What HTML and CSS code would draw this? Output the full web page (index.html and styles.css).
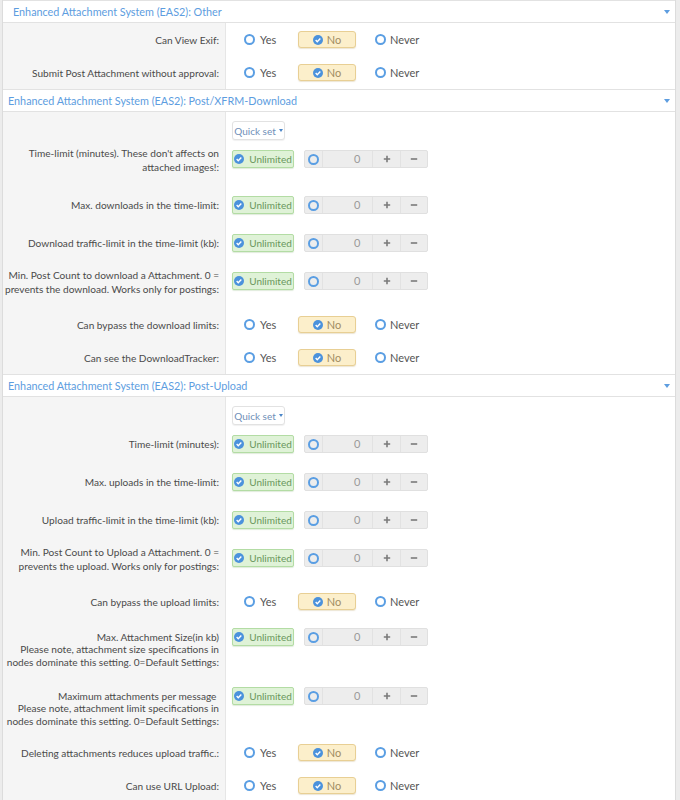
FILE: index.html
```html
<!DOCTYPE html>
<html lang="en">
<head>
    <meta charset="UTF-8">
    <title>EAS2 Permissions</title>
    <link rel="stylesheet" href="styles.css">
</head>
<body>
    <div class="blocks">

        <!-- Other -->
        <section class="block block--first">
            <h2 class="block-header">Enhanced Attachment System (EAS2): Other <span class="toggle"></span></h2>
            <div class="row row--radio">
                <div class="row-label">Can View Exif:</div>
                <div class="row-input">
                    <div class="choices">
                        <span class="choice"><i class="radio"></i>Yes</span>
                        <span class="choice choice--on"><svg class="check" viewBox="0 0 12 12"><circle cx="6" cy="6" r="6"/><path d="M3.2 6.1l1.9 1.9 3.7-3.8"/></svg>No</span>
                        <span class="choice choice--never"><i class="radio"></i>Never</span>
                    </div>
                </div>
            </div>
            <div class="row row--radio">
                <div class="row-label">Submit Post Attachment without approval:</div>
                <div class="row-input">
                    <div class="choices">
                        <span class="choice"><i class="radio"></i>Yes</span>
                        <span class="choice choice--on"><svg class="check" viewBox="0 0 12 12"><circle cx="6" cy="6" r="6"/><path d="M3.2 6.1l1.9 1.9 3.7-3.8"/></svg>No</span>
                        <span class="choice choice--never"><i class="radio"></i>Never</span>
                    </div>
                </div>
            </div>
        </section>

        <!-- Download -->
        <section class="block">
            <h2 class="block-header">Enhanced Attachment System (EAS2): Post/XFRM-Download <span class="toggle"></span></h2>
            <div class="row row--quick">
                <div class="row-label"></div>
                <div class="row-input"><span class="quick">Quick set <i class="caret"></i></span></div>
            </div>
            <div class="row row--2">
                <div class="row-label">Time-limit (minutes). These don't affects on<br>attached images!:</div>
                <div class="row-input">
                    <div class="unit">
                        <span class="unl"><svg class="check" viewBox="0 0 12 12"><circle cx="6" cy="6" r="6"/><path d="M3.2 6.1l1.9 1.9 3.7-3.8"/></svg>Unlimited</span>
                        <div class="spin">
                            <span class="spin-radio"><i class="radio"></i></span>
                            <span class="spin-val">0</span>
                            <span class="spin-btn"><svg viewBox="0 0 10 10"><path d="M5 1v8M1 5h8"/></svg></span>
                            <span class="spin-btn"><svg viewBox="0 0 10 10"><path d="M1 5h8"/></svg></span>
                        </div>
                    </div>
                </div>
            </div>
            <div class="row">
                <div class="row-label">Max. downloads in the time-limit:</div>
                <div class="row-input">
                    <div class="unit">
                        <span class="unl"><svg class="check" viewBox="0 0 12 12"><circle cx="6" cy="6" r="6"/><path d="M3.2 6.1l1.9 1.9 3.7-3.8"/></svg>Unlimited</span>
                        <div class="spin">
                            <span class="spin-radio"><i class="radio"></i></span>
                            <span class="spin-val">0</span>
                            <span class="spin-btn"><svg viewBox="0 0 10 10"><path d="M5 1v8M1 5h8"/></svg></span>
                            <span class="spin-btn"><svg viewBox="0 0 10 10"><path d="M1 5h8"/></svg></span>
                        </div>
                    </div>
                </div>
            </div>
            <div class="row">
                <div class="row-label">Download traffic-limit in the time-limit (kb):</div>
                <div class="row-input">
                    <div class="unit">
                        <span class="unl"><svg class="check" viewBox="0 0 12 12"><circle cx="6" cy="6" r="6"/><path d="M3.2 6.1l1.9 1.9 3.7-3.8"/></svg>Unlimited</span>
                        <div class="spin">
                            <span class="spin-radio"><i class="radio"></i></span>
                            <span class="spin-val">0</span>
                            <span class="spin-btn"><svg viewBox="0 0 10 10"><path d="M5 1v8M1 5h8"/></svg></span>
                            <span class="spin-btn"><svg viewBox="0 0 10 10"><path d="M1 5h8"/></svg></span>
                        </div>
                    </div>
                </div>
            </div>
            <div class="row row--2">
                <div class="row-label">Min. Post Count to download a Attachment. 0&nbsp;=<br>prevents the download. Works only for postings:</div>
                <div class="row-input">
                    <div class="unit">
                        <span class="unl"><svg class="check" viewBox="0 0 12 12"><circle cx="6" cy="6" r="6"/><path d="M3.2 6.1l1.9 1.9 3.7-3.8"/></svg>Unlimited</span>
                        <div class="spin">
                            <span class="spin-radio"><i class="radio"></i></span>
                            <span class="spin-val">0</span>
                            <span class="spin-btn"><svg viewBox="0 0 10 10"><path d="M5 1v8M1 5h8"/></svg></span>
                            <span class="spin-btn"><svg viewBox="0 0 10 10"><path d="M1 5h8"/></svg></span>
                        </div>
                    </div>
                </div>
            </div>
            <div class="row row--radio">
                <div class="row-label">Can bypass the download limits:</div>
                <div class="row-input">
                    <div class="choices">
                        <span class="choice"><i class="radio"></i>Yes</span>
                        <span class="choice choice--on"><svg class="check" viewBox="0 0 12 12"><circle cx="6" cy="6" r="6"/><path d="M3.2 6.1l1.9 1.9 3.7-3.8"/></svg>No</span>
                        <span class="choice choice--never"><i class="radio"></i>Never</span>
                    </div>
                </div>
            </div>
            <div class="row row--radio">
                <div class="row-label">Can see the DownloadTracker:</div>
                <div class="row-input">
                    <div class="choices">
                        <span class="choice"><i class="radio"></i>Yes</span>
                        <span class="choice choice--on"><svg class="check" viewBox="0 0 12 12"><circle cx="6" cy="6" r="6"/><path d="M3.2 6.1l1.9 1.9 3.7-3.8"/></svg>No</span>
                        <span class="choice choice--never"><i class="radio"></i>Never</span>
                    </div>
                </div>
            </div>
        </section>

        <!-- Upload -->
        <section class="block">
            <h2 class="block-header">Enhanced Attachment System (EAS2): Post-Upload <span class="toggle"></span></h2>
            <div class="row row--quick">
                <div class="row-label"></div>
                <div class="row-input"><span class="quick">Quick set <i class="caret"></i></span></div>
            </div>
            <div class="row">
                <div class="row-label">Time-limit (minutes):</div>
                <div class="row-input">
                    <div class="unit">
                        <span class="unl"><svg class="check" viewBox="0 0 12 12"><circle cx="6" cy="6" r="6"/><path d="M3.2 6.1l1.9 1.9 3.7-3.8"/></svg>Unlimited</span>
                        <div class="spin">
                            <span class="spin-radio"><i class="radio"></i></span>
                            <span class="spin-val">0</span>
                            <span class="spin-btn"><svg viewBox="0 0 10 10"><path d="M5 1v8M1 5h8"/></svg></span>
                            <span class="spin-btn"><svg viewBox="0 0 10 10"><path d="M1 5h8"/></svg></span>
                        </div>
                    </div>
                </div>
            </div>
            <div class="row">
                <div class="row-label">Max. uploads in the time-limit:</div>
                <div class="row-input">
                    <div class="unit">
                        <span class="unl"><svg class="check" viewBox="0 0 12 12"><circle cx="6" cy="6" r="6"/><path d="M3.2 6.1l1.9 1.9 3.7-3.8"/></svg>Unlimited</span>
                        <div class="spin">
                            <span class="spin-radio"><i class="radio"></i></span>
                            <span class="spin-val">0</span>
                            <span class="spin-btn"><svg viewBox="0 0 10 10"><path d="M5 1v8M1 5h8"/></svg></span>
                            <span class="spin-btn"><svg viewBox="0 0 10 10"><path d="M1 5h8"/></svg></span>
                        </div>
                    </div>
                </div>
            </div>
            <div class="row">
                <div class="row-label">Upload traffic-limit in the time-limit (kb):</div>
                <div class="row-input">
                    <div class="unit">
                        <span class="unl"><svg class="check" viewBox="0 0 12 12"><circle cx="6" cy="6" r="6"/><path d="M3.2 6.1l1.9 1.9 3.7-3.8"/></svg>Unlimited</span>
                        <div class="spin">
                            <span class="spin-radio"><i class="radio"></i></span>
                            <span class="spin-val">0</span>
                            <span class="spin-btn"><svg viewBox="0 0 10 10"><path d="M5 1v8M1 5h8"/></svg></span>
                            <span class="spin-btn"><svg viewBox="0 0 10 10"><path d="M1 5h8"/></svg></span>
                        </div>
                    </div>
                </div>
            </div>
            <div class="row row--2">
                <div class="row-label">Min. Post Count to Upload a Attachment. 0&nbsp;=<br>prevents the upload. Works only for postings:</div>
                <div class="row-input">
                    <div class="unit">
                        <span class="unl"><svg class="check" viewBox="0 0 12 12"><circle cx="6" cy="6" r="6"/><path d="M3.2 6.1l1.9 1.9 3.7-3.8"/></svg>Unlimited</span>
                        <div class="spin">
                            <span class="spin-radio"><i class="radio"></i></span>
                            <span class="spin-val">0</span>
                            <span class="spin-btn"><svg viewBox="0 0 10 10"><path d="M5 1v8M1 5h8"/></svg></span>
                            <span class="spin-btn"><svg viewBox="0 0 10 10"><path d="M1 5h8"/></svg></span>
                        </div>
                    </div>
                </div>
            </div>
            <div class="row row--radio">
                <div class="row-label">Can bypass the upload limits:</div>
                <div class="row-input">
                    <div class="choices">
                        <span class="choice"><i class="radio"></i>Yes</span>
                        <span class="choice choice--on"><svg class="check" viewBox="0 0 12 12"><circle cx="6" cy="6" r="6"/><path d="M3.2 6.1l1.9 1.9 3.7-3.8"/></svg>No</span>
                        <span class="choice choice--never"><i class="radio"></i>Never</span>
                    </div>
                </div>
            </div>
            <div class="row row--3">
                <div class="row-label">Max. Attachment Size(in kb)<br>Please note, attachment size specifications in<br>nodes dominate this setting. 0=Default Settings:</div>
                <div class="row-input">
                    <div class="unit">
                        <span class="unl"><svg class="check" viewBox="0 0 12 12"><circle cx="6" cy="6" r="6"/><path d="M3.2 6.1l1.9 1.9 3.7-3.8"/></svg>Unlimited</span>
                        <div class="spin">
                            <span class="spin-radio"><i class="radio"></i></span>
                            <span class="spin-val">0</span>
                            <span class="spin-btn"><svg viewBox="0 0 10 10"><path d="M5 1v8M1 5h8"/></svg></span>
                            <span class="spin-btn"><svg viewBox="0 0 10 10"><path d="M1 5h8"/></svg></span>
                        </div>
                    </div>
                </div>
            </div>
            <div class="row row--3">
                <div class="row-label">Maximum attachments per message&nbsp;<br>Please note, attachment limit specifications in<br>nodes dominate this setting. 0=Default Settings:</div>
                <div class="row-input">
                    <div class="unit">
                        <span class="unl"><svg class="check" viewBox="0 0 12 12"><circle cx="6" cy="6" r="6"/><path d="M3.2 6.1l1.9 1.9 3.7-3.8"/></svg>Unlimited</span>
                        <div class="spin">
                            <span class="spin-radio"><i class="radio"></i></span>
                            <span class="spin-val">0</span>
                            <span class="spin-btn"><svg viewBox="0 0 10 10"><path d="M5 1v8M1 5h8"/></svg></span>
                            <span class="spin-btn"><svg viewBox="0 0 10 10"><path d="M1 5h8"/></svg></span>
                        </div>
                    </div>
                </div>
            </div>
            <div class="row row--radio">
                <div class="row-label">Deleting attachments reduces upload traffic.:</div>
                <div class="row-input">
                    <div class="choices">
                        <span class="choice"><i class="radio"></i>Yes</span>
                        <span class="choice choice--on"><svg class="check" viewBox="0 0 12 12"><circle cx="6" cy="6" r="6"/><path d="M3.2 6.1l1.9 1.9 3.7-3.8"/></svg>No</span>
                        <span class="choice choice--never"><i class="radio"></i>Never</span>
                    </div>
                </div>
            </div>
            <div class="row row--radio">
                <div class="row-label">Can use URL Upload:</div>
                <div class="row-input">
                    <div class="choices">
                        <span class="choice"><i class="radio"></i>Yes</span>
                        <span class="choice choice--on"><svg class="check" viewBox="0 0 12 12"><circle cx="6" cy="6" r="6"/><path d="M3.2 6.1l1.9 1.9 3.7-3.8"/></svg>No</span>
                        <span class="choice choice--never"><i class="radio"></i>Never</span>
                    </div>
                </div>
            </div>
        </section>

    </div>
</body>
</html>
```

FILE: styles.css
```css
:root {
    --link: #5d9de0;
    --label-bg: #f5f5f5;
    --line: #e2e2e2;
    --text: #4a4a4a;
    --radio: #5a9ee3;
}

* {
    box-sizing: border-box;
    margin: 0;
    padding: 0;
}

body {
    background: #ececec;
    font-family: Lato, 'Open Sans', sans-serif;
    color: var(--text);
    font-size: 11px;
}

.blocks {
    margin: 0 4px 0 2px;
    background: #fff;
    border-left: 1px solid #dcdcdc;
    border-right: 1px solid #dcdcdc;
}

.block {
    border-top: 1px solid var(--line);
}

.block-header {
    display: flex;
    justify-content: space-between;
    align-items: center;
    height: 22px;
    padding: 0 5px 0 5px;
    border-bottom: 1px solid var(--line);
    font-size: 10.8px;
    font-weight: 400;
    color: var(--link);
}

.block--first .block-header {
    padding-left: 10px;
}

.toggle {
    width: 0;
    height: 0;
    border-left: 3.5px solid transparent;
    border-right: 3.5px solid transparent;
    border-top: 4px solid var(--link);
}

/* rows */
.row {
    display: flex;
}

.row-label {
    flex: 0 0 223px;
    min-width: 0;
    background: var(--label-bg);
    border-right: 1px solid #e6e6e6;
    text-align: right;
    padding: 12px 6px 0 0;
    font-size: 10.1px;
    line-height: 14px;
    white-space: nowrap;
}

.row-input {
    flex: 1;
    padding: 10px 0 10px 6px;
}

.row--radio .row-label {
    padding-top: 10px;
    padding-bottom: 9px;
}

.row--radio .row-input {
    padding: 8px 0 0 6px;
}

.row--quick .row-input {
    padding: 9px 0 0 6px;
}

.row--2 .row-label {
    padding-top: 6px;
    padding-bottom: 12px;
}

.row--3 .row-label {
    padding-top: 12.5px;
    padding-bottom: 9px;
    line-height: 12.5px;
}

/* yes / no / never */
.choices {
    display: flex;
    align-items: center;
    height: 17px;
    padding-left: 12px;
}

.choice {
    display: inline-flex;
    align-items: center;
    gap: 5px;
    width: 54px;
    color: #555;
}

.choice--on {
    width: 58px;
    height: 17px;
    justify-content: center;
    gap: 4px;
    background: #fcefcb;
    border: 1px solid #e8cf94;
    border-radius: 3px;
    box-shadow: 0 1px 1px rgba(180, 150, 80, 0.25);
    color: #a08c62;
}

.choice--never {
    margin-left: 19px;
    gap: 4px;
}

.radio {
    display: inline-block;
    width: 11px;
    height: 11px;
    border: 2px solid var(--radio);
    border-radius: 50%;
}

.check {
    width: 10px;
    height: 10px;
    flex: none;
}

.check circle {
    fill: #4b92dc;
}

.check path {
    fill: none;
    stroke: #fff;
    stroke-width: 1.7;
}

/* quick set */
.quick {
    display: inline-flex;
    align-items: center;
    gap: 3px;
    height: 19px;
    width: 53px;
    justify-content: center;
    border: 1px solid #e2e2e2;
    border-radius: 3px;
    background: #fff;
    box-shadow: 0 1px 1px rgba(0, 0, 0, 0.06);
    color: #6f8fb8;
    font-size: 10px;
}

.caret {
    width: 0;
    height: 0;
    border-left: 2.5px solid transparent;
    border-right: 2.5px solid transparent;
    border-top: 3px solid #4b86c8;
}

/* unlimited + spinner */
.unit {
    display: flex;
    align-items: center;
}

.unl {
    display: inline-flex;
    align-items: center;
    justify-content: center;
    gap: 5px;
    width: 62px;
    height: 18px;
    background: #dff2d7;
    border: 1px solid #b3dca4;
    border-radius: 2px;
    box-shadow: 0 1px 1px rgba(100, 160, 80, 0.2);
    color: #69975c;
    font-size: 10px;
}

.spin {
    display: flex;
    margin-left: 10px;
    width: 124px;
    height: 18px;
    background: #ededed;
    border: 1px solid #e0e0e0;
    border-radius: 2px;
}

.spin-radio {
    display: flex;
    align-items: center;
    justify-content: center;
    width: 18px;
    border-right: 1px solid #e2e2e2;
}

.spin-val {
    width: 51px;
    text-align: right;
    padding-right: 12px;
    line-height: 16px;
    color: #9a9a9a;
}

.spin-btn {
    display: flex;
    align-items: center;
    justify-content: center;
    width: 28px;
    border-left: 1px solid #e2e2e2;
}

.spin-btn svg {
    width: 8px;
    height: 8px;
}

.spin-btn path {
    stroke: #7a7a7a;
    stroke-width: 2;
    fill: none;
}
```
